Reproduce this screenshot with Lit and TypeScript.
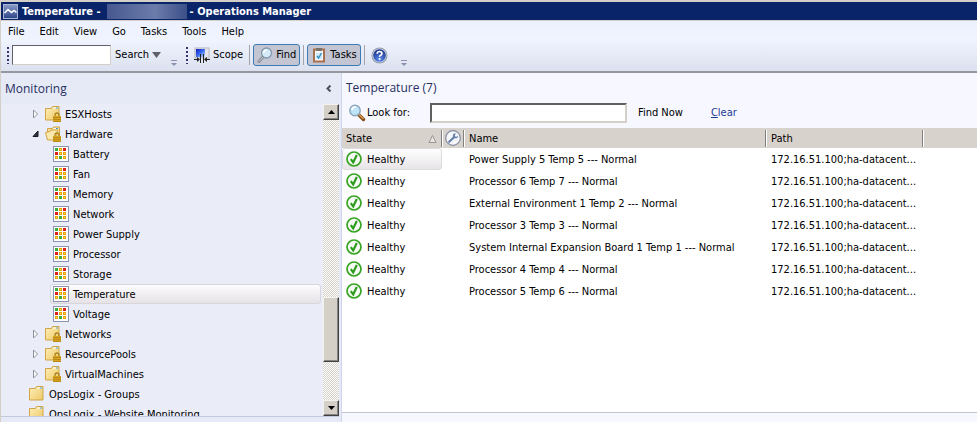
import { LitElement, html, css, svg, nothing } from "lit";
import { customElement } from "lit/decorators.js";
import { classMap } from "lit/directives/class-map.js";

type TreeKind = "locked" | "open" | "view" | "folder";
interface TreeRow { label: string; kind: TreeKind; selected?: boolean }

const treeRows: TreeRow[] = [
  { label: "ESXHosts", kind: "locked" },
  { label: "Hardware", kind: "open" },
  { label: "Battery", kind: "view" },
  { label: "Fan", kind: "view" },
  { label: "Memory", kind: "view" },
  { label: "Network", kind: "view" },
  { label: "Power Supply", kind: "view" },
  { label: "Processor", kind: "view" },
  { label: "Storage", kind: "view" },
  { label: "Temperature", kind: "view", selected: true },
  { label: "Voltage", kind: "view" },
  { label: "Networks", kind: "locked" },
  { label: "ResourcePools", kind: "locked" },
  { label: "VirtualMachines", kind: "locked" },
  { label: "OpsLogix - Groups", kind: "folder" },
  { label: "OpsLogix - Website Monitoring", kind: "folder" },
];

const sensors = [
  "Power Supply 5 Temp 5 --- Normal",
  "Processor 6 Temp 7 --- Normal",
  "External Environment 1 Temp 2 --- Normal",
  "Processor 3 Temp 3 --- Normal",
  "System Internal Expansion Board 1 Temp 1 --- Normal",
  "Processor 4 Temp 4 --- Normal",
  "Processor 5 Temp 6 --- Normal",
];

const menus = ["File", "Edit", "View", "Go", "Tasks", "Tools", "Help"];

const appIcon = html`<svg width="15" height="15" viewBox="0 0 15 15" aria-hidden="true">
  <defs><linearGradient id="app" x2="0" y2="1"><stop stop-color="#8a9cc8"/><stop offset="1" stop-color="#2c4488"/></linearGradient></defs>
  <rect x=".5" y=".5" width="14" height="14" fill="url(#app)" stroke="#a8b4d4"/>
  <path d="M1.500 9 L5 5.500 L8.500 8.500 L11 6.500 L13.500 8.500" fill="none" stroke="#fff" stroke-width="1.600"/>
</svg>`;

const scopeIcon = html`<svg width="16" height="16" viewBox="0 0 16 16" aria-hidden="true">
  <defs><linearGradient id="scope" x2="1" y2="1"><stop stop-color="#0a1cc0"/><stop offset=".5" stop-color="#3c6cf0"/><stop offset="1" stop-color="#c8e0ff"/></linearGradient></defs>
  <rect x="1" y="1" width="14" height="10" fill="#e4e4ea" stroke="#b4b6c0"/>
  <rect x="2" y="2" width="9" height="8" fill="url(#scope)"/>
  <path d="M6.500 7v9M9.500 7v9M0 12.500h5M11 12.500h5" stroke="#222" fill="none"/>
  <path d="M3 10l3 2.500l-3 2.500zM13 10l-3 2.500l3 2.500z" fill="#222"/>
</svg>`;

const findIcon = html`<svg width="16" height="16" viewBox="0 0 16 16" aria-hidden="true">
  <path d="M6 10L2 14.500" stroke="#8a8f98" stroke-width="3" stroke-linecap="round"/>
  <path d="M6 10L2 14.500" stroke="#c4c8d0" stroke-width="1"/>
  <circle cx="9.500" cy="6" r="5" fill="#d4eaf8" stroke="#8098ac" stroke-width="1.300"/>
  <path d="M6.500 6a3 3 0 0 1 3-3" stroke="#fff" stroke-width="1.500" fill="none"/>
</svg>`;

const lookIcon = html`<svg width="18" height="18" viewBox="0 0 18 18" aria-hidden="true">
  <path d="M10.500 10.500L15.500 15.500" stroke="#7c4a18" stroke-width="3.400" stroke-linecap="round"/>
  <path d="M10.500 10L15.500 15" stroke="#e09848" stroke-width="1.400"/>
  <circle cx="7" cy="6.500" r="5.200" fill="#bfe4f8" stroke="#8aa4bc" stroke-width="1.400"/>
  <path d="M3.800 6a3.500 3.500 0 0 1 4-3" stroke="#fff" stroke-width="1.800" fill="none"/>
</svg>`;

const tasksIcon = html`<svg width="16" height="16" viewBox="0 0 16 16" aria-hidden="true">
  <rect x="3" y="2.500" width="10" height="12" fill="#f4f8fc" stroke="#a8704c" stroke-width="2"/>
  <rect x="5" y="1" width="6" height="3" fill="#7c7468"/>
  <path d="M5 6h6v6H5z" fill="#d0e8f8"/>
  <path d="M6 9l1.600 2L10.500 6" fill="none" stroke="#3090c0" stroke-width="1.400"/>
</svg>`;

const helpIcon = html`<svg width="17" height="17" viewBox="0 0 17 17" aria-hidden="true">
  <defs><radialGradient id="help" cy=".85" r=".8"><stop stop-color="#5c8cf0"/><stop offset="1" stop-color="#1c3488"/></radialGradient></defs>
  <circle cx="8.500" cy="8.500" r="8" fill="#909aac"/>
  <circle cx="8.500" cy="8.500" r="7" fill="#d8dce4"/>
  <circle cx="8.500" cy="8.500" r="6.300" fill="url(#help)"/>
  <path d="M6.200 6.800q0-2.300 2.400-2.300t2.300 2q0 1.200-1.200 1.800t-1.100 1.500" fill="none" stroke="#fff" stroke-width="1.700"/>
  <rect x="7.700" y="11" width="1.800" height="1.800" fill="#fff"/>
</svg>`;

const lock = svg`<path d="M10 10.500V9a2 2 0 0 1 4 0v1.500" fill="none" stroke="#a8821c" stroke-width="1.300"/>
  <rect x="8" y="10" width="8" height="6" fill="#d8a420"/>
  <path d="M8 11.500h8M8 13.500h8M8 15.500h8" stroke="#b88818" stroke-width="1"/>`;

const folderIcon = (locked: boolean) => html`<svg width="16" height="17" viewBox="0 0 16 17" aria-hidden="true">
  <defs><linearGradient id="fold" x2="1" y2="1"><stop stop-color="#fff0b8"/><stop offset="1" stop-color="#ecc868"/></linearGradient></defs>
  <path d="M.5 2.500h6l1-2h6.500v13.500H.5z" fill="url(#fold)" stroke="#d0a448"/>
  <path d="M8 2h5" stroke="#fff"/><path d="M11 2h2" stroke="#3c9cd8"/>
  ${locked ? lock : nothing}
</svg>`;

const openIcon = html`<svg width="16" height="17" viewBox="0 0 16 17" aria-hidden="true">
  <path d="M2.500 13.500v-11h5l1-1.500h6v12z" fill="#f4dc94" stroke="#d0a448"/>
  <path d="M8.500 2.500h5" stroke="#fff"/><path d="M11 2.500h2" stroke="#3c9cd8"/>
  <path d="M.5 6.500L5 5.500l1-1.500h6.500L11 14H2.500z" fill="#fbe9ac" stroke="#d0a448"/>
  ${lock}
</svg>`;

const G = "#3cac3c", Y = "#e8a400", R = "#dc2018";
const cells = [G, Y, R, R, Y, Y, Y, G, Y];
const viewIcon = html`<svg width="16" height="16" viewBox="0 0 16 16" shape-rendering="crispEdges" aria-hidden="true">
  <rect x=".5" y=".5" width="15" height="15" fill="#fff" stroke="#8c94b0"/>
  ${cells.map((c, i) => {
    const x = 2 + (i % 3) * 4, y = 2 + Math.floor(i / 3) * 4;
    return svg`<rect x=${x} y=${y} width="3" height="3" fill=${c}/>${c === Y ? svg`<rect x=${x + 1} y=${y + 1} width="1" height="1" fill="#ffd860"/>` : nothing}`;
  })}
</svg>`;

const healthyIcon = html`<svg width="16" height="16" viewBox="0 0 16 16" aria-hidden="true">
  <circle cx="8" cy="8" r="7" fill="#f6faf4" stroke="#38a424" stroke-width="1.700"/>
  <path d="M4.800 8.200l2.400 3.200L10.800 4" fill="none" stroke="#2c9c1c" stroke-width="2.200"/>
</svg>`;

const wrenchIcon = html`<svg width="16" height="16" viewBox="0 0 16 16" aria-hidden="true">
  <circle cx="8" cy="8" r="7.300" fill="#f4f6fa" stroke="#848ca0" stroke-width="1.200"/>
  <path d="M4.200 11.800l4.800-4.600" stroke="#6880ac" stroke-width="2.200" stroke-linecap="round"/>
  <path d="M10.800 3.200a2.600 2.600 0 1 0 2.200 2.600l-2 1.200l-1.300-1.300z" fill="#6880ac"/>
</svg>`;

@customElement("app-root")
export class AppRoot extends LitElement {
  static styles = css`
    :host {
      display: flex;
      flex-direction: column;
      height: 100vh;
      box-sizing: border-box;
      overflow: hidden;
      border-top: 2px solid #d4d0c8;
      border-left: 1px solid #d4d0c8;
      background: #e6eaf6;
      color: #000;
      font: 11px/16px "DejaVu Sans Condensed", "DejaVu Sans", sans-serif;
      font-stretch: condensed;
    }
    * { box-sizing: border-box; }
    svg { display: block; flex: none; }
    button { font: inherit; color: inherit; margin: 0; padding: 0; border: 0; background: none; }
    input { font: inherit; padding: 0 4px; border-radius: 0; outline: 0; }
    .title {
      display: flex; align-items: center; height: 18px; padding-left: 2px;
      background: #0a246a; color: #fff; font-weight: bold; white-space: nowrap;
    }
    .title svg { margin-right: 4px; }
    .title span { padding-top: 2px; }
    .title .redacted { width: 80px; height: 15px; margin: 0 3px 0 6px; background: linear-gradient(90deg, #46588f, #6c7cab 60%, #3c5088); }
    .menu {
      display: flex; align-items: center; gap: 15px; height: 22px; padding-left: 7px;
      border-top: 1px solid #d4d0c8; background: linear-gradient(#edf1fd, #f0f4ff);
    }
    .toolbar {
      display: flex; align-items: center; height: 31px; padding: 0 0 3px 6px;
      border-bottom: 2px solid #97979f; background: linear-gradient(#eef2fe, #dce1ef);
    }
    .grip { width: 2px; height: 17px; margin-right: 3px; background: repeating-linear-gradient(#34346c 0 2px, transparent 2px 4px); }
    .search { width: 99px; height: 20px; border: 1px solid #d4d0c8; border-top-color: #606068; border-left-color: #606068; background: #fff; }
    .drop { display: flex; align-items: center; gap: 3px; margin-left: 4px; }
    .more { align-self: flex-end; margin: 0 9px 2px 10px; }
    .tool { display: flex; align-items: center; gap: 3px; height: 22px; padding: 0 3px; white-space: nowrap; }
    .tool.on { border: 1px solid #3c7cb4; border-radius: 3px; background: #c3c6d2; }
    .sep { width: 1px; height: 20px; margin: 0 3px; background: #a4a4a8; }
    .help { margin: 0 3px; }
    .body { display: flex; flex: 1; min-height: 0; }
    .side { display: flex; flex-direction: column; width: 341px; flex: none; padding: 0 2px 5px 0; border-right: 1px solid #cdd6ea; background: #e6eaf6; }
    h2 { margin: 0; font: 500 12px/18px "Open Sans", "Noto Sans", sans-serif; color: #262f62; }
    .sidehead { display: flex; align-items: center; justify-content: space-between; height: 31px; padding: 0 7px 0 4px; }
    .treebox { display: flex; flex: 1; min-height: 0; border-bottom: 1px solid #c4cade; }
    .tree { flex: 1; min-width: 0; margin: 0; padding: 0; overflow: hidden; list-style: none; background: #eaecf8; }
    .row { display: flex; align-items: center; height: 20px; margin-right: 2px; white-space: nowrap; }
    .row.locked, .row.open { padding-left: 30px; }
    .row.folder { padding-left: 28px; }
    .row.view { margin-left: 49px; padding-left: 2px; border: 1px solid transparent; border-radius: 3px; }
    .row.selected { border-color: #d6d6dc; background: linear-gradient(#fdfcff, #e6e2e6); }
    .twist { width: 14px; }
    .name { padding-top: 2px; }
    .row .name { margin-left: 4px; }
    .scroll { display: flex; flex-direction: column; width: 16px; background: repeating-conic-gradient(#fff 0 25%, #d4d0c8 0 50%) 0 0 / 2px 2px; }
    .raised { border: 1px solid; border-color: #f4f2ee #404040 #404040 #f4f2ee; background: #d4d0c8; box-shadow: inset -1px -1px #868480; }
    .arrow { display: flex; align-items: center; justify-content: center; height: 16px; }
    .gap { flex: 178; }
    .thumb { flex: 64; }
    .rest { flex: 38; }
    .main { display: flex; flex-direction: column; flex: 1; min-width: 0; padding-bottom: 9px; background: #f7f7ff; }
    .mainhead { display: flex; align-items: center; height: 27px; padding: 3px 0 0 4px; }
    .look { display: flex; align-items: center; height: 28px; padding: 0 0 3px 6px; }
    .look label { width: 63px; margin-left: 1px; }
    .look input { width: 197px; height: 20px; border: 2px solid; border-color: #606060 #d4d0c8 #d4d0c8 #606060; background: #fff; }
    .findnow { margin: 0 28px 0 11px; }
    a { color: #1c3c94; text-decoration: none; }
    .list { flex: 1; min-height: 0; overflow: hidden; background: #fff; border-bottom: 1px solid #c0c4d0; }
    table { width: 100%; border-collapse: collapse; table-layout: fixed; }
    .state { width: 100px; } .maint { width: 22px; } .sensor { width: 302px; } .path { width: 157px; }
    thead { background: #d8d2cd; }
    th {
      height: 20px; padding: 2px 5px 0; text-align: left; font-weight: normal;
      background:
        linear-gradient(#808080, #808080) right center / 1px 17px no-repeat,
        linear-gradient(#fff, #fff) left center / 1px 17px no-repeat;
    }
    th:first-child { padding-left: 4px; background: linear-gradient(#808080, #808080) right center / 1px 17px no-repeat; }
    th:last-child { background: linear-gradient(#fff, #fff) left center / 1px 17px no-repeat; }
    th.wrench { padding: 0 3px; }
    .sort { display: flex; align-items: center; justify-content: space-between; }
    td { height: 22px; padding: 2px 5px 0; overflow: hidden; white-space: nowrap; }
    td:first-child { padding: 0; }
    .cell { display: flex; align-items: center; gap: 5px; height: 22px; padding-left: 3px; border: 1px solid transparent; border-radius: 3px; }
    .cell.selected { border-color: #dcdce0; background: linear-gradient(#fff, #e8e4e8); }
  `;

  private treeRow(r: TreeRow) {
    const icon = r.kind === "view" ? viewIcon : r.kind === "open" ? openIcon : folderIcon(r.kind === "locked");
    const twist = r.kind === "locked"
      ? html`<svg class="twist" width="14" height="10" viewBox="0 0 14 10"><path d="M2.500 1v8l4-4z" fill="#fff" stroke="#909098"/></svg>`
      : r.kind === "open"
      ? html`<svg class="twist" width="14" height="10" viewBox="0 0 14 10"><path d="M7 2v5.500H2z" fill="#303038" stroke="#181820"/></svg>`
      : nothing;
    return html`<li class=${classMap({ row: true, [r.kind]: true, selected: !!r.selected })}>${twist}${icon}<span class="name">${r.label}</span></li>`;
  }

  render() {
    const more = html`<svg class="more" width="6" height="6" viewBox="0 0 6 6" aria-hidden="true"><path d="M0 .5h6" stroke="#8c90b0"/><path d="M0 3h6l-3 3z" fill="#8c90b0"/></svg>`;
    return html`
      <header class="title">${appIcon}<span>Temperature -</span><span class="redacted"></span><span>- Operations Manager</span></header>
      <nav class="menu">${menus.map((m) => html`<button>${m}</button>`)}</nav>
      <div class="toolbar">
        <span class="grip"></span>
        <input class="search" aria-label="Search" />
        <button class="drop">Search <svg width="9" height="6" viewBox="0 0 9 6"><path d="M0 0h9l-4.500 6z" fill="#606068"/></svg></button>
        ${more}
        <span class="grip"></span>
        <button class="tool">${scopeIcon}Scope</button>
        <span class="sep"></span>
        <button class="tool on">${findIcon}Find</button>
        <span class="sep"></span>
        <button class="tool on">${tasksIcon}Tasks</button>
        <span class="sep"></span>
        <button class="help" aria-label="Help">${helpIcon}</button>
        ${more}
      </div>
      <div class="body">
        <aside class="side">
          <div class="sidehead"><h2>Monitoring</h2>
            <button aria-label="Collapse"><svg width="6" height="7" viewBox="0 0 6 7"><path d="M4.500 .5L1.500 3.500L4.500 6.500" fill="none" stroke="#505058" stroke-width="2"/></svg></button>
          </div>
          <div class="treebox">
            <ul class="tree">${treeRows.map((r) => this.treeRow(r))}</ul>
            <div class="scroll">
              <button class="raised arrow" aria-label="Scroll up"><svg width="7" height="4" viewBox="0 0 7 4"><path d="M0 4h7L3.500 0z"/></svg></button>
              <div class="gap"></div><div class="raised thumb"></div><div class="rest"></div>
              <button class="raised arrow" aria-label="Scroll down"><svg width="7" height="4" viewBox="0 0 7 4"><path d="M0 0h7L3.500 4z"/></svg></button>
            </div>
          </div>
        </aside>
        <main class="main">
          <div class="mainhead"><h2>Temperature (7)</h2></div>
          <div class="look">${lookIcon}<label for="look">Look for:</label><input id="look" />
            <button class="findnow">Find Now</button><a href="#clear"><u>C</u>lear</a>
          </div>
          <div class="list">
            <table>
              <colgroup><col class="state" /><col class="maint" /><col class="sensor" /><col class="path" /><col /></colgroup>
              <thead><tr>
                <th><span class="sort">State <svg width="9" height="8" viewBox="0 0 9 8"><path d="M1 7.500L4.500 .5L8 7.500z" fill="#e8e4e0" stroke="#989490"/></svg></span></th>
                <th class="wrench" aria-label="Maintenance">${wrenchIcon}</th><th>Name</th><th>Path</th><th></th>
              </tr></thead>
              <tbody>${sensors.map((s, i) => html`<tr>
                <td><span class=${classMap({ cell: true, selected: i === 0 })}>${healthyIcon}<span class="name">Healthy</span></span></td>
                <td></td><td>${s}</td><td>172.16.51.100;ha-datacent...</td><td></td>
              </tr>`)}</tbody>
            </table>
          </div>
        </main>
      </div>`;
  }
}
